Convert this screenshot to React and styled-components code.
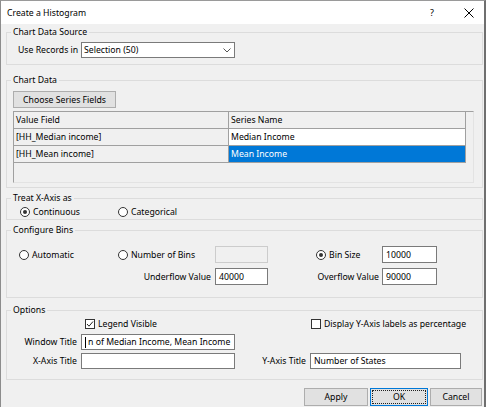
import React from "react";
import styled, { createGlobalStyle } from "styled-components";

const GlobalStyle = createGlobalStyle`
  html, body {
    margin: 0;
    padding: 0;
    background: #ffffff;
  }
  body {
    font-family: "Noto Sans", "Liberation Sans", sans-serif;
    font-size: 8.7px;
    color: #000;
  }
  * {
    box-sizing: border-box;
  }
`;

const Window = styled.div`
  width: 486px;
  height: 407px;
  border-top: 1px solid #9a9a9a;
  border-left: 1px solid #8c8c8c;
  border-right: 2px solid #6f6f6f;
  background: #f0f0f0;
  overflow: hidden;
  display: flex;
  flex-direction: column;
`;

const TitleBar = styled.div`
  height: 23px;
  flex: none;
  background: #fff;
  display: flex;
  align-items: center;
  padding-left: 6px;
  font-size: 8.7px;
`;

const TitleText = styled.div`
  flex: 1;
`;

const TitleButton = styled.div`
  width: ${(p) => p.$w}px;
  height: 23px;
  display: flex;
  align-items: center;
  justify-content: center;
  font-size: 9px;
`;

const Group = styled.fieldset`
  margin: ${(p) => p.$top}px 1px 0 5px;
  padding: 0;
  border: 1px solid #dcdcdc;
  min-width: 0;
`;

const Caption = styled.legend`
  margin-left: 4px;
  padding: 0 2px;
  line-height: 12px;
`;

const SourceRow = styled.div`
  display: grid;
  grid-template-columns: 63px 154px;
  align-items: center;
  padding: 4px 0 6px 11px;
`;

const Select = styled.div`
  height: 16px;
  background: #fff;
  border: 1px solid #7a7a7a;
  display: flex;
  align-items: center;
  justify-content: space-between;
  padding: 0 3px 0 2px;
`;

const DataBody = styled.div`
  display: flex;
  flex-direction: column;
  align-items: flex-start;
  gap: 3px;
  padding: 5px 0 4px 6px;
`;

const PushButton = styled.button`
  height: ${(p) => p.$h || 17}px;
  width: ${(p) => p.$w}px;
  background: #e1e1e1;
  border: 1px solid ${(p) => (p.$default ? "#0078d7" : "#adadad")};
  outline: ${(p) => (p.$default ? "1px dotted #202020" : "none")};
  outline-offset: -3px;
  font: inherit;
  color: #000;
  padding: 0;
`;

const Table = styled.div`
  width: 461px;
  height: 72px;
  background: #f0f0f0;
  border-top: 1px solid #a0a0a0;
  border-left: 1px solid #a0a0a0;
  border-right: 1px solid #e3e3e3;
  border-bottom: 1px solid #e3e3e3;
  display: grid;
  grid-template-columns: 215px 237px;
  grid-auto-rows: 17px;
  align-content: start;
`;

const Cell = styled.div`
  border-right: 1px solid #a0a0a0;
  border-bottom: 1px solid #a0a0a0;
  padding-left: 2px;
  display: flex;
  align-items: center;
  white-space: nowrap;
  overflow: hidden;
  background: ${(p) => p.$bg || "#f0f0f0"};
  color: ${(p) => p.$fg || "#000"};
`;

const AxisRow = styled.div`
  display: grid;
  grid-template-columns: 98px auto;
  grid-template-rows: 14px;
  align-items: center;
  padding: 1px 0 0 13px;
`;

const Choice = styled.div`
  display: flex;
  align-items: center;
  gap: 3px;
  white-space: nowrap;
  margin-left: ${(p) => p.$indent || 0}px;
`;

const RadioDot = styled.span`
  width: 10px;
  height: 10px;
  flex: none;
  border-radius: 50%;
  border: 1px solid #333;
  background: #fff;
  display: flex;
  align-items: center;
  justify-content: center;

  &::after {
    content: "";
    width: 4px;
    height: 4px;
    border-radius: 50%;
    background: ${(p) => (p.$on ? "#333" : "transparent")};
  }
`;

const CheckBox = styled.span`
  width: 10px;
  height: 10px;
  flex: none;
  border: 1px solid #333;
  background: #fff;
  display: flex;
  align-items: center;
  justify-content: center;
`;

const BinsGrid = styled.div`
  display: grid;
  grid-template-columns: 99px 97px 53px 48px 66px 55px;
  grid-template-rows: 17px 17px;
  row-gap: 5px;
  align-items: center;
  padding: 10px 0 12px 12px;
`;

const FieldLabel = styled.div`
  grid-column: ${(p) => p.$col || "auto"};
  text-align: right;
  padding-right: ${(p) => p.$gap || 4}px;
  white-space: nowrap;
`;

const TextBox = styled.div`
  grid-column: ${(p) => p.$col || "auto"};
  height: ${(p) => p.$h || 17}px;
  background: ${(p) => (p.$disabled ? "#f0f0f0" : "#fff")};
  border: 1px solid ${(p) => (p.$disabled ? "#cccccc" : "#7a7a7a")};
  padding-left: 3px;
  display: flex;
  align-items: center;
  white-space: nowrap;
  overflow: hidden;
`;

const Caret = styled.span`
  width: 1px;
  height: 11px;
  background: #000;
  margin-right: 2px;
  flex: none;
`;

const OptionsGrid = styled.div`
  display: grid;
  grid-template-columns: 74px 154px 75px 151px;
  grid-template-rows: 14px 16px 16px;
  row-gap: 3px;
  align-items: center;
  padding: 1px 0 10px 0;
`;

const Footer = styled.div`
  display: flex;
  justify-content: flex-end;
  gap: 2px;
  margin-top: 8px;
  padding-right: 2px;
`;

const Chevron = () => (
  <svg width="8" height="5" viewBox="0 0 8 5">
    <polyline points="0.5,0.5 4,4 7.5,0.5" fill="none" stroke="#555" strokeWidth="1" />
  </svg>
);

const CloseIcon = () => (
  <svg width="10" height="10" viewBox="0 0 10 10">
    <path d="M0.5 0.5 L9.5 9.5 M9.5 0.5 L0.5 9.5" stroke="#000" strokeWidth="1" />
  </svg>
);

const Tick = () => (
  <svg width="8" height="8" viewBox="0 0 8 8">
    <polyline points="1,4 3,6.2 7,1.5" fill="none" stroke="#222" strokeWidth="1" />
  </svg>
);

const Radio = ({ on, children, indent }) => (
  <Choice $indent={indent}>
    <RadioDot $on={on} />
    <span>{children}</span>
  </Choice>
);

const Check = ({ on, children, indent }) => (
  <Choice $indent={indent}>
    <CheckBox>{on && <Tick />}</CheckBox>
    <span>{children}</span>
  </Choice>
);

const rows = [
  { field: "[HH_Median income]", name: "Median Income", selected: false },
  { field: "[HH_Mean income]", name: "Mean Income", selected: true },
];

export default function App() {
  return (
    <>
      <GlobalStyle />
      <Window>
        <TitleBar>
          <TitleText>Create a Histogram</TitleText>
          <TitleButton $w={44}>?</TitleButton>
          <TitleButton $w={30}>
            <CloseIcon />
          </TitleButton>
        </TitleBar>

        <Group $top={2}>
          <Caption>Chart Data Source</Caption>
          <SourceRow>
            <span>Use Records in</span>
            <Select>
              <span>Selection (50)</span>
              <Chevron />
            </Select>
          </SourceRow>
        </Group>

        <Group $top={9}>
          <Caption>Chart Data</Caption>
          <DataBody>
            <PushButton $w={103}>Choose Series Fields</PushButton>
            <Table>
              <Cell>Value Field</Cell>
              <Cell>Series Name</Cell>
              {rows.map((r) => (
                <React.Fragment key={r.field}>
                  <Cell>{r.field}</Cell>
                  <Cell
                    $bg={r.selected ? "#0078d7" : "#ffffff"}
                    $fg={r.selected ? "#ffffff" : "#000"}
                  >
                    {r.name}
                  </Cell>
                </React.Fragment>
              ))}
            </Table>
          </DataBody>
        </Group>

        <Group $top={4}>
          <Caption>Treat X-Axis as</Caption>
          <AxisRow>
            <Radio on>Continuous</Radio>
            <Radio>Categorical</Radio>
          </AxisRow>
        </Group>

        <Group $top={4}>
          <Caption>Configure Bins</Caption>
          <BinsGrid>
            <Radio>Automatic</Radio>
            <Radio>Number of Bins</Radio>
            <TextBox $disabled />
            <span />
            <Radio on>Bin Size</Radio>
            <TextBox>10000</TextBox>

            <FieldLabel $col="1 / 3">Underflow Value</FieldLabel>
            <TextBox>40000</TextBox>
            <span />
            <FieldLabel $gap={3}>Overflow Value</FieldLabel>
            <TextBox>90000</TextBox>
          </BinsGrid>
        </Group>

        <Group $top={6}>
          <Caption>Options</Caption>
          <OptionsGrid>
            <span />
            <Check on indent={4}>
              Legend Visible
            </Check>
            <span />
            <Check indent={1}>Display Y-Axis labels as percentage</Check>

            <FieldLabel>Window Title</FieldLabel>
            <TextBox $h={16}>
              <Caret />
              n of Median Income, Mean Income
            </TextBox>
            <span />
            <span />

            <FieldLabel>X-Axis Title</FieldLabel>
            <TextBox $h={16} />
            <FieldLabel>Y-Axis Title</FieldLabel>
            <TextBox $h={16}>Number of States</TextBox>
          </OptionsGrid>
        </Group>

        <Footer>
          <PushButton $w={64} $h={18}>
            Apply
          </PushButton>
          <PushButton $w={58} $h={18} $default>
            OK
          </PushButton>
          <PushButton $w={52} $h={18}>
            Cancel
          </PushButton>
        </Footer>
      </Window>
    </>
  );
}
